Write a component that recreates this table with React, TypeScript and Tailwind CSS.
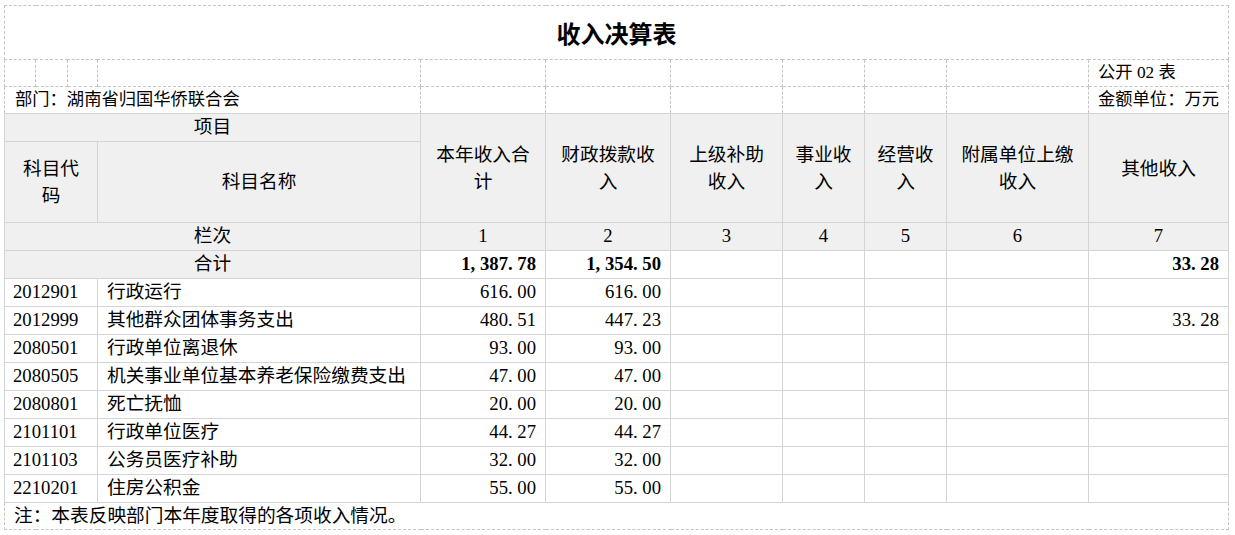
import React from "react";

const FONT = { fontFamily: '"Liberation Serif", "Noto Sans CJK SC", serif' };

const dashed = "border border-dashed border-[#c4c4c4]";
const solid = "border border-solid border-[#d4d4d4]";

function Num({ v }: { v: string }) {
  return (
    <>
      {v.split("").map((c, i) =>
        c === "." || c === "," ? (
          <span key={i} className="inline-block w-[0.5em] text-left">
            {c}
          </span>
        ) : (
          <span key={i}>{c}</span>
        )
      )}
    </>
  );
}

const rows: [string, string, string, string, string][] = [
  ["2012901", "行政运行", "616.00", "616.00", ""],
  ["2012999", "其他群众团体事务支出", "480.51", "447.23", "33.28"],
  ["2080501", "行政单位离退休", "93.00", "93.00", ""],
  ["2080505", "机关事业单位基本养老保险缴费支出", "47.00", "47.00", ""],
  ["2080801", "死亡抚恤", "20.00", "20.00", ""],
  ["2101101", "行政单位医疗", "44.27", "44.27", ""],
  ["2101103", "公务员医疗补助", "32.00", "32.00", ""],
  ["2210201", "住房公积金", "55.00", "55.00", ""],
];

const headers: React.ReactNode[] = [
  <>本年收入合<br />计</>,
  <>财政拨款收<br />入</>,
  <>上级补助<br />收入</>,
  <>事业收<br />入</>,
  <>经营收<br />入</>,
  <>附属单位上缴<br />收入</>,
  <>其他收入</>,
];

export default function App() {
  const widths = [31, 32, 30, 323, 125, 125, 112, 82, 82, 142, 140];
  return (
    <div className="w-[1235px] h-[535px] bg-white pl-[4px] pt-[5px] text-black" style={FONT}>
      <table className="table-fixed border-collapse w-[1224px]">
        <colgroup>
          {widths.map((w, i) => (
            <col key={i} style={{ width: w }} />
          ))}
        </colgroup>
        <tbody>
          <tr className="h-[54px]">
            <td colSpan={11} className={`${dashed} text-center align-middle text-[24px] font-bold`} style={{ fontFamily: '"Noto Sans CJK SC", sans-serif' }}>
              收入决算表
            </td>
          </tr>
          <tr className="h-[27px] text-[17.3px]">
            {Array.from({ length: 10 }).map((_, i) => (
              <td key={i} className={dashed}></td>
            ))}
            <td className={`${dashed} pl-[9px] leading-none`}>公开 02 表</td>
          </tr>
          <tr className="h-[27px] text-[17.3px]">
            <td colSpan={4} className={`${dashed} pl-[10px] leading-none`}>部门：湖南省归国华侨联合会</td>
            {Array.from({ length: 6 }).map((_, i) => (
              <td key={i} className={dashed}></td>
            ))}
            <td className={`${dashed} pl-[9px] leading-none`}>金额单位：万元</td>
          </tr>
          <tr className="h-[28px] text-[18.7px]">
            <td colSpan={4} className={`${solid} bg-[#f0f0f0] text-center leading-none`}>项目</td>
            {headers.map((h, i) => (
              <td key={i} rowSpan={2} className={`${solid} bg-[#f0f0f0] text-center leading-[27px]`}>
                {h}
              </td>
            ))}
          </tr>
          <tr className="h-[81px] text-[18.7px]">
            <td colSpan={3} className={`${solid} bg-[#f0f0f0] text-center leading-[27px]`}>
              科目代<br />码
            </td>
            <td className={`${solid} bg-[#f0f0f0] text-center`}>科目名称</td>
          </tr>
          <tr className="h-[28px] text-[18.7px]">
            <td colSpan={4} className={`${solid} bg-[#f0f0f0] text-center leading-none`}>栏次</td>
            {[1, 2, 3, 4, 5, 6, 7].map((n) => (
              <td key={n} className={`${solid} bg-[#f0f0f0] text-center leading-none`}>{n}</td>
            ))}
          </tr>
          <tr className="h-[28px] text-[18.7px]">
            <td colSpan={4} className={`${solid} bg-[#f0f0f0] text-center leading-none`}>合计</td>
            <td className={`${solid} text-right pr-[9px] font-bold leading-none`}><Num v="1,387.78" /></td>
            <td className={`${solid} text-right pr-[9px] font-bold leading-none`}><Num v="1,354.50" /></td>
            <td className={solid}></td>
            <td className={solid}></td>
            <td className={solid}></td>
            <td className={solid}></td>
            <td className={`${solid} text-right pr-[9px] font-bold leading-none`}><Num v="33.28" /></td>
          </tr>
          {rows.map((r) => (
            <tr key={r[0]} className="h-[28px] text-[18.7px]">
              <td colSpan={3} className={`${solid} pl-[8px] leading-none`}>{r[0]}</td>
              <td className={`${solid} pl-[9px] leading-none whitespace-nowrap overflow-hidden`}>{r[1]}</td>
              <td className={`${solid} text-right pr-[9px] leading-none`}><Num v={r[2]} /></td>
              <td className={`${solid} text-right pr-[9px] leading-none`}><Num v={r[3]} /></td>
              <td className={solid}></td>
              <td className={solid}></td>
              <td className={solid}></td>
              <td className={solid}></td>
              <td className={`${solid} text-right pr-[9px] leading-none`}>{r[4] ? <Num v={r[4]} /> : null}</td>
            </tr>
          ))}
          <tr className="h-[27px] text-[18.7px]">
            <td colSpan={11} className={`${dashed} pl-[9px] leading-none`}>
              注：本表反映部门本年度取得的各项收入情况。
            </td>
          </tr>
        </tbody>
      </table>
    </div>
  );
}
